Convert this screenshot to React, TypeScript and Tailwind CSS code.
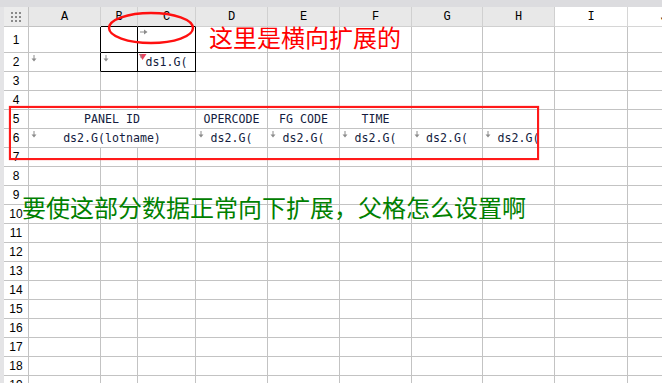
import type { ReactNode } from "react"

const letters = ["A", "B", "C", "D", "E", "F", "G", "H", "I", "J"]
const rowNums = Array.from({ length: 19 }, (_, i) => i + 1)

function DownMark() {
    return (
        <svg className="absolute left-[2px] top-[2px]" width="6" height="7" viewBox="0 0 6 7">
            <path d="M3 0v5" stroke="#8c8c8c" strokeWidth="1" />
            <path d="M0.5 3.5h5L3 6.5z" fill="#8c8c8c" />
        </svg>
    )
}

function RightMark() {
    return (
        <svg className="absolute left-[2px] top-[2px]" width="8" height="6" viewBox="0 0 8 6">
            <path d="M0 3h5" stroke="#8c8c8c" strokeWidth="1" />
            <path d="M4 0.5v5L7.5 3z" fill="#8c8c8c" />
        </svg>
    )
}

function ParentMark() {
    return (
        <svg className="absolute left-[1px] top-[1px]" width="8" height="7" viewBox="0 0 8 7">
            <path d="M0 0h7.5L3.5 6z" fill="#e8455f" />
            <path d="M2 0v4" stroke="#8c8c8c" strokeWidth="1" />
        </svg>
    )
}

function GridDots() {
    return (
        <div className="grid grid-cols-3 gap-[2px]">
            {Array.from({ length: 9 }).map((_, i) => (
                <span key={i} className="w-[2px] h-[2px] bg-[#8a8a8a]" />
            ))}
        </div>
    )
}

// one body cell, borders on right and bottom like the sheet grid
function Cell({ className = "", children }: { className?: string; children?: ReactNode }) {
    return (
        <div
            className={`relative flex items-center justify-center overflow-hidden whitespace-nowrap border-r border-b border-[#c3c3c3] text-[11.6px] text-[#141c40] pt-[1px] ${className}`}
        >
            {children}
        </div>
    )
}

function RowHead({ n }: { n: number }) {
    return (
        <div className="flex items-center justify-center border-r border-b border-[#c3c3c3] bg-white text-[12px] text-black font-['Liberation_Sans',sans-serif]">
            {n}
        </div>
    )
}

function bodyRow(n: number) {
    const cells: ReactNode[] = [<RowHead key="h" n={n} />]

    if (n === 1) {
        cells.push(<Cell key="a" className="border-r-black" />)
        cells.push(<Cell key="b" className="border-r-black border-b-black" />)
        cells.push(
            <Cell key="c" className="border-r-black border-b-black">
                <RightMark />
            </Cell>
        )
        for (let i = 3; i < 10; i++) cells.push(<Cell key={i} />)
        return cells
    }

    if (n === 2) {
        cells.push(
            <Cell key="a" className="border-r-black">
                <DownMark />
            </Cell>
        )
        cells.push(
            <Cell key="b" className="border-r-black border-b-black">
                <DownMark />
            </Cell>
        )
        cells.push(
            <Cell key="c" className="border-r-black border-b-black">
                <ParentMark />
                ds1.G(
            </Cell>
        )
        for (let i = 3; i < 10; i++) cells.push(<Cell key={i} />)
        return cells
    }

    if (n === 5) {
        cells.push(
            <Cell key="abc" className="col-span-3">
                PANEL ID
            </Cell>
        )
        cells.push(<Cell key="d">OPERCODE</Cell>)
        cells.push(<Cell key="e">FG CODE</Cell>)
        cells.push(<Cell key="f">TIME</Cell>)
        for (let i = 6; i < 10; i++) cells.push(<Cell key={i} />)
        return cells
    }

    if (n === 6) {
        cells.push(
            <Cell key="abc" className="col-span-3">
                <DownMark />
                ds2.G(lotname)
            </Cell>
        )
        for (let i = 3; i < 8; i++)
            cells.push(
                <Cell key={i}>
                    <DownMark />
                    ds2.G(
                </Cell>
            )
        for (let i = 8; i < 10; i++) cells.push(<Cell key={i} />)
        return cells
    }

    for (let i = 0; i < 10; i++) cells.push(<Cell key={i} />)
    return cells
}

export default function App() {
    return (
        <div className="relative w-[662px] h-[383px] overflow-hidden bg-white font-['DejaVu_Sans_Mono',monospace]">
            <div className="h-[7px] bg-[#dcdcdf]" />
            <div className="flex">
                <div className="w-[4px] shrink-0 bg-[#e4e4e6]" />
                <div className="grid grid-cols-[25px_72px_37px_58px_72px_72px_72px_71px_72px_73px_72px] grid-rows-[20px_26px_repeat(18,19px)]">
                    {/* corner */}
                    <div className="flex items-center justify-center bg-[#ececec] border-r border-b border-[#c3c3c3]">
                        <GridDots />
                    </div>
                    {letters.map((l, i) => (
                        <div
                            key={l}
                            className={`flex items-center justify-center border-r border-b text-[12px] text-black font-['Liberation_Mono',monospace] ${
                                i < 8 ? "bg-[#e8e8e8] border-[#d0d0d0]" : "bg-white border-[#d6d6d6]"
                            } ${i === 1 || i === 2 ? "border-b-black" : ""} ${i === 0 ? "border-b-[#c3c3c3]" : ""}`}
                        >
                            {l}
                        </div>
                    ))}
                    {rowNums.map((n) => bodyRow(n))}
                </div>
            </div>

            {/* annotations drawn over the sheet */}
            <svg className="absolute left-[107px] top-[11px]" width="90" height="36" viewBox="0 0 90 36">
                <ellipse cx="44" cy="17" rx="42" ry="15" fill="none" stroke="#ff1010" strokeWidth="2.4" />
            </svg>
            <div className="absolute left-[209px] top-[27px] text-[24px] leading-[20px] text-[#ff0000] font-['Noto_Sans_CJK_SC',sans-serif]">
                这里是横向扩展的
            </div>
            <div className="absolute left-[9px] top-[106px] w-[530px] h-[54px] border-2 border-[#ff1a1a] shadow-[0_0_1px_#ff5050]" />
            <div className="absolute left-[22px] top-[197px] text-[24px] leading-[20px] text-[#008000] font-['Noto_Sans_CJK_SC',sans-serif]">
                要使这部分数据正常向下扩展，父格怎么设置啊
            </div>
        </div>
    )
}
